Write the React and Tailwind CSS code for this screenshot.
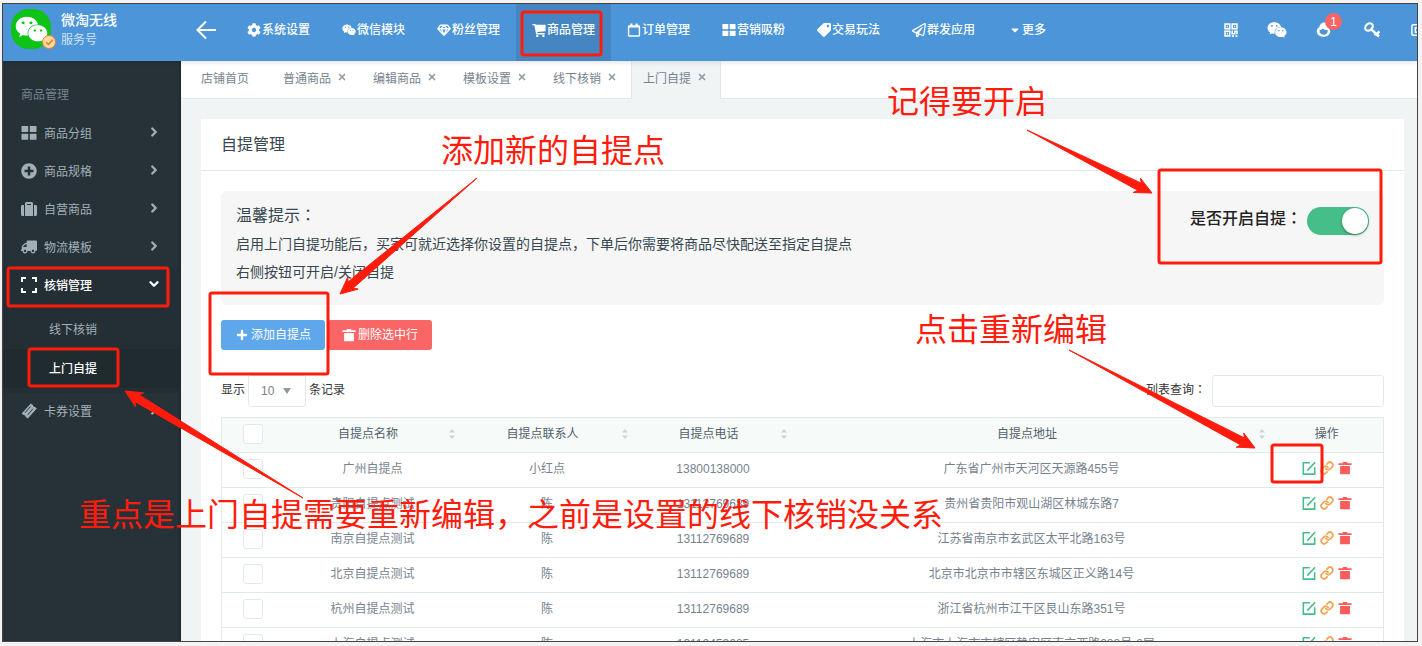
import React, { useState } from 'react';
import { FaCog, FaWeixin, FaRegPaperPlane, FaTag, FaCaretDown, FaPlusCircle, FaSuitcase, FaTruck } from 'react-icons/fa';
import { Check, ChevronDown, ChevronRight, Link, Plus, X } from 'lucide-react';

const BackIcon = ({ className }) => (
  <svg viewBox="0 0 20 20" fill="none" stroke="currentColor" strokeWidth="2" className={className}>
    <path d="M20 10H1.500M10 1.500L1.500 10l8.500 8.500" />
  </svg>
);

const GridIcon = ({ className }) => (
  <svg viewBox="0 0 16 16" fill="currentColor" className={className}>
    <rect x="0.5" y="1" width="6.7" height="6" rx="0.6" />
    <rect x="8.8" y="1" width="6.7" height="6" rx="0.6" />
    <rect x="0.5" y="8.8" width="6.7" height="6" rx="0.6" />
    <rect x="8.8" y="8.8" width="6.7" height="6" rx="0.6" />
  </svg>
);

const DiamondIcon = ({ className }) => (
  <svg viewBox="0 0 16 16" fill="none" stroke="currentColor" strokeWidth="1.6" strokeLinejoin="round" className={className}>
    <path d="M4 2.5h8L15 6.5 8 14 1 6.5zM1 6.5h14M5 6.5L8 14l3-7.5M5 6.5L8 2.5l3 4" />
  </svg>
);

const CartIcon = ({ className }) => (
  <svg viewBox="0 0 16 16" fill="currentColor" className={className}>
    <path d="M0.5 1h3.4l0.4 1H15.500v7.300L5.900 10.200l0.300 1.200H14.500v1.600H4.800L2.600 2.600H0.5z" />
    <rect x="4.800" y="13.800" width="2.400" height="2.200" />
    <rect x="11.800" y="13.800" width="2.400" height="2.200" />
  </svg>
);

const CalendarIcon = ({ className }) => (
  <svg viewBox="0 0 16 16" fill="none" stroke="currentColor" strokeWidth="1.6" className={className}>
    <rect x="1.8" y="3.4" width="12.4" height="11.400" rx="0.8" />
    <path d="M1.8 4.200h12.400" strokeWidth="2" />
    <path d="M5 0.600v3.4M11 0.600v3.4" strokeWidth="2.400" />
  </svg>
);

const ExpandIcon = ({ className }) => (
  <svg viewBox="0 0 16 16" fill="none" stroke="currentColor" strokeWidth="2" className={className}>
    <path d="M1 5V1h4M11 1h4v4M15 11v4h-4M5 15H1v-4" />
  </svg>
);

const TicketIcon = ({ className }) => (
  <svg viewBox="0 0 16 16" className={className}>
    <path fill="currentColor" d="M9.800 0.400l2.200 1.700c-0.300 1 0.600 2 1.700 1.700l2.100 1.700-9 10.100-2.200-1.600c0.300-1.100-0.600-2-1.700-1.700l-2.300-1.700z" />
    <path d="M9.4 3.6L4 9.8M12 5.7L6.6 12" stroke="#263238" strokeWidth="0.9" />
  </svg>
);

const QrIcon = ({ className }) => (
  <svg viewBox="0 0 16 16" fill="none" stroke="currentColor" strokeWidth="1.8" className={className}>
    <rect x="1.2" y="1.2" width="5.4" height="5.4" />
    <rect x="9.4" y="1.2" width="5.4" height="5.4" />
    <rect x="1.2" y="9.4" width="5.4" height="5.4" />
    <path d="M3.2 3.9h1.4M11.4 3.9h1.4M3.2 12.1h1.4M9.4 8.6v3.6h3V9.4h2.4v3.4M9 15h2.4M13 15h2.4" />
  </svg>
);

const PenguinIcon = ({ className }) => (
  <svg viewBox="0 0 16 16" className={className}>
    <path fill="currentColor" d="M8.500 0.300c2.800 0.600 3.600 2.800 4 5.200 1.700 1.200 2.700 2.800 2.700 4.600 0 3.200-3.200 5.600-7.200 5.600s-7.200-2.400-7.200-5.600c0-1.900 1-3.500 2.700-4.700C3.900 3.200 5.400 0.900 8.500 0.300z" />
    <path fill="#4b95d8" d="M3.800 8.600c1.600-0.200 2.600-0.800 3.400-1.700 1.400 1.300 3.200 1.700 5.200 1.600 0.400 2.900-1.500 5.100-4.300 5.100-2.700 0-4.600-2.100-4.300-5z" />
  </svg>
);

const KeyIcon = ({ className }) => (
  <svg viewBox="0 0 16 16" fill="none" stroke="currentColor" className={className}>
    <ellipse cx="5" cy="5" rx="4.200" ry="3.200" strokeWidth="2.200" transform="rotate(-45 5 5)" />
    <path d="M7.500 7.500l7.500 7M10.500 13.300l2.200-2.400M13.500 11.400l2-2" strokeWidth="2.400" />
  </svg>
);

const ScreenIcon = ({ className }) => (
  <svg viewBox="0 0 16 16" fill="none" stroke="currentColor" strokeWidth="1.700" className={className}>
    <rect x="1" y="2" width="14" height="12" rx="1.500" />
    <path d="M5 5.500h6v5H5z" />
  </svg>
);

const TrashIcon = ({ className }) => (
  <svg viewBox="0 0 16 16" fill="currentColor" className={className}>
    <path d="M5.500 1h5v1.600H15.500v2H0.500v-2h5zM2.400 5.800h11.200V15H2.400z" />
  </svg>
);

const EditIcon = ({ className }) => (
  <svg viewBox="0 0 16 16" fill="none" stroke="currentColor" strokeWidth="1.800" className={className}>
    <path d="M9 2H1.500v13h13V7M15 1.500L6 11" />
  </svg>
);

const SortIcon = () => (
  <svg viewBox="0 0 6 10" fill="#cdd5d9" className="h-[10px] w-[6px]">
    <path d="M3 0l3 3.500H0zM0 6.500h6L3 10z" />
  </svg>
);

// full-width colon, centred in its box
const Colon = () => <span className="leading-none font-['Noto_Sans_CJK_TC',sans-serif]">：</span>;

const navItems = [
  { label: '系统设置', Icon: FaCog },
  { label: '微信模块', Icon: FaWeixin },
  { label: '粉丝管理', Icon: DiamondIcon },
  { label: '商品管理', Icon: CartIcon, active: true },
  { label: '订单管理', Icon: CalendarIcon },
  { label: '营销吸粉', Icon: GridIcon },
  { label: '交易玩法', Icon: FaTag, flip: true },
  { label: '群发应用', Icon: FaRegPaperPlane },
];

const menuItems = [
  { label: '商品分组', Icon: GridIcon },
  { label: '商品规格', Icon: FaPlusCircle },
  { label: '自营商品', Icon: FaSuitcase },
  { label: '物流模板', Icon: FaTruck, flip: true },
  { label: '核销管理', Icon: ExpandIcon, open: true, children: ['线下核销', '上门自提'] },
  { label: '卡券设置', Icon: TicketIcon },
];

const tabs = ['普通商品', '编辑商品', '模板设置', '线下核销', '上门自提'];

const points = [
  { name: '广州自提点', contact: '小红点', phone: '13800138000', address: '广东省广州市天河区天源路455号' },
  { name: '贵阳自提点测试', contact: '陈', phone: '13112769689', address: '贵州省贵阳市观山湖区林城东路7' },
  { name: '南京自提点测试', contact: '陈', phone: '13112769689', address: '江苏省南京市玄武区太平北路163号' },
  { name: '北京自提点测试', contact: '陈', phone: '13112769689', address: '北京市北京市市辖区东城区正义路14号' },
  { name: '杭州自提点测试', contact: '陈', phone: '13112769689', address: '浙江省杭州市江干区艮山东路351号' },
  { name: '上海自提点测试', contact: '陈', phone: '13112453685', address: '上海市上海市市辖区静安区南京西路288号-2层' },
];

const Header = () => (
  <header className="relative z-10 flex h-[57px] shrink-0 bg-[#4b95d8] text-white shadow-[0_2px_4px_rgba(0,0,0,0.1)]">
    <div className="flex w-[178px] shrink-0 items-start gap-[6px] pt-[5px] pl-2">
      <div className="relative h-10 w-11 shrink-0">
        <div className="flex h-10 w-10 items-center justify-center rounded-[18px] bg-[#0cc316]">
          <FaWeixin className="h-[33px] w-[33px]" />
        </div>
        <span className="absolute -right-px bottom-0 flex h-[14px] w-[14px] items-center justify-center rounded-full border border-[#e8802c] bg-[#ffd9a0] text-[#e8802c]">
          <Check className="h-[9px] w-[9px]" strokeWidth={4} />
        </span>
      </div>
      <div>
        <p className="text-sm leading-[22px] font-medium">微淘无线</p>
        <p className="text-xs leading-[18px] text-[#cfe3f6]">服务号</p>
      </div>
    </div>
    <button type="button" aria-label="返回" className="flex w-[50px] shrink-0 items-center pb-[6px] pl-[15px]">
      <BackIcon className="h-5 w-5" />
    </button>
    <nav className="flex shrink-0">
      {navItems.map(({ label, Icon, active, flip }) => (
        <a
          key={label}
          href="#"
          className={`flex w-[95px] items-center justify-center gap-px pb-[5px] text-xs font-medium ${active ? 'bg-[#4586c2]' : ''}`}
        >
          <Icon className={`h-[14px] w-[14px] ${flip ? '-scale-x-100' : ''}`} />
          {label}
        </a>
      ))}
      <a href="#" className="flex items-center gap-px pb-[5px] pl-[18px] text-xs font-medium">
        <FaCaretDown className="h-3 w-3" />
        更多
      </a>
    </nav>
    <div className="-mr-2 ml-auto flex shrink-0 items-center gap-[29px] pb-[6px]">
      <button type="button" aria-label="二维码"><QrIcon className="h-[14px] w-[14px]" /></button>
      <button type="button" aria-label="微信"><FaWeixin className="h-5 w-5" /></button>
      <button type="button" aria-label="消息" className="relative">
        <PenguinIcon className="h-[15px] w-[15px]" />
        <span className="absolute -top-[9px] left-[9px] flex h-[17px] w-[17px] items-center justify-center rounded-full bg-[#fa6464] text-xs">1</span>
      </button>
      <button type="button" aria-label="密码" className="mr-[2px] ml-1"><KeyIcon className="h-4 w-4" /></button>
      <button type="button" aria-label="全屏"><ScreenIcon className="h-[14px] w-[14px]" /></button>
    </div>
  </header>
);

const Sidebar = () => (
  <aside className="w-[178px] shrink-0 border-r-2 border-[#1f2a2f] bg-[#263238] text-xs text-[#a3afb7]">
    <h2 className="pt-[15px] pb-px pl-[18px] leading-[38px] text-[#76838f]">商品管理</h2>
    <ul>
      {menuItems.map(({ label, Icon, open, flip, children }) => (
        <li key={label} className={open ? 'bg-[#242f35]' : ''}>
          <a href="#" className={`flex h-[38px] items-center pr-[18px] pl-[18px] ${open ? 'font-medium text-white' : ''}`}>
            <Icon className={`mr-[7px] mb-[3px] h-4 w-4 ${flip ? '-scale-x-100' : ''}`} />
            {label}
            {open ? (
              <ChevronDown className="mb-1 ml-auto h-[14px] w-[14px]" strokeWidth={4} />
            ) : (
              <ChevronRight className="mb-1 ml-auto h-[14px] w-[14px]" strokeWidth={4} />
            )}
          </a>
          {children && (
            <ul className="py-[5px]">
              {children.map((child) => (
                <li key={child}>
                  <a
                    href="#"
                    className={`flex h-[39px] items-center pl-[46px] ${child === '上门自提' ? 'bg-[#202b30] font-medium text-white' : ''}`}
                  >
                    {child}
                  </a>
                </li>
              ))}
            </ul>
          )}
        </li>
      ))}
    </ul>
  </aside>
);

const TabBar = () => (
  <div className="flex h-[38px] shrink-0 border-b border-[#e0e9ea] bg-white text-xs text-[#76838f]">
    <a href="#" className="flex w-[90px] items-center pb-[2px] pl-5">店铺首页</a>
    {tabs.map((tab) => {
      const active = tab === '上门自提';
      return (
        <div
          key={tab}
          className={`flex w-[90px] items-center border-x pb-[2px] pl-[11px] ${active ? '-mb-px border-[#e0e9ea] bg-[#f0f4f5]' : 'border-transparent'}`}
        >
          <a href="#">{tab}</a>
          <button type="button" aria-label={`关闭${tab}`} className="ml-[6px] pb-1">
            <X className="h-[10px] w-[10px] text-[#8f9aa3]" strokeWidth={4} />
          </button>
        </div>
      );
    })}
  </div>
);

const PointTable = () => (
  <table className="mt-[10px] w-full table-fixed border-collapse border border-[#e1e9eb] text-center text-xs text-[#76838f]">
    <colgroup>
      <col className="w-[63px]" />
      <col className="w-[176px]" />
      <col className="w-[173px]" />
      <col className="w-[159px]" />
      <col />
      <col className="w-[113px]" />
    </colgroup>
    <thead className="bg-[#f6faf9] text-[#526069]">
      <tr className="h-[35px] border-b border-[#e1e9eb]">
        <th className="p-0 pb-[2px]">
          <input type="checkbox" aria-label="全选" className="mx-auto block h-5 w-5 appearance-none rounded-[3px] border border-[#e1e9eb] bg-white checked:bg-[#5ea7ea]" />
        </th>
        {['自提点名称', '自提点联系人', '自提点电话', '自提点地址'].map((title) => (
          <th key={title} className="p-0 pb-[2px] font-normal">
            <div className="flex items-center pr-[6px]">
              <span className="flex-1 pl-[3px]">{title}</span>
              <SortIcon />
            </div>
          </th>
        ))}
        <th className="p-0 pb-[2px] font-normal">操作</th>
      </tr>
    </thead>
    <tbody>
      {points.map((point) => (
        <tr key={point.name} className="h-[35px] border-b border-[#e1e9eb]">
          <td className="p-0 pb-[2px]">
            <input type="checkbox" aria-label={point.name} className="mx-auto block h-5 w-5 appearance-none rounded-[3px] border border-[#e1e9eb] bg-white checked:bg-[#5ea7ea]" />
          </td>
          <td className="p-0 pb-[2px]">{point.name}</td>
          <td className="p-0 pb-[2px]">{point.contact}</td>
          <td className="p-0 pb-[2px]">{point.phone}</td>
          <td className="p-0 pb-[2px]">{point.address}</td>
          <td className="p-0 pb-1">
            <div className="flex items-center justify-center gap-1">
              <button type="button" aria-label="编辑" className="text-[#46be8a]"><EditIcon className="h-[14px] w-[14px]" /></button>
              <button type="button" aria-label="链接" className="text-[#f2a654]"><Link className="h-[14px] w-[14px]" strokeWidth={3} /></button>
              <button type="button" aria-label="删除" className="text-[#fa5c5c]"><TrashIcon className="h-[14px] w-[14px]" /></button>
            </div>
          </td>
        </tr>
      ))}
    </tbody>
  </table>
);

const arrows = [
  { from: [1027, 130], to: [1152, 193] },
  { from: [1069, 350], to: [1255, 448] },
  { from: [477, 178], to: [340, 294] },
  { from: [303, 498], to: [125, 391] },
];

// thin tail that widens towards the head
const arrowPoints = ([x1, y1], [x2, y2]) => {
  const len = Math.hypot(x2 - x1, y2 - y1);
  const dx = (x2 - x1) / len;
  const dy = (y2 - y1) / len;
  const at = (back, side) => `${x2 - dx * back - dy * side},${y2 - dy * back + dx * side}`;
  return [`${x1},${y1}`, at(14, 4), at(17, 8), `${x2},${y2}`, at(17, -8), at(14, -4)].join(' ');
};

const Annotations = () => (
  <div className="pointer-events-none absolute inset-0 z-20 overflow-hidden text-[32px] leading-10 font-normal whitespace-nowrap text-[#ff1c0c]">
    <svg className="absolute inset-0 h-full w-full" fill="none">
      <g stroke="#ff1c0c" strokeWidth="3">
        <rect x="522" y="12" width="79" height="43" rx="2" />
        <rect x="8" y="268" width="160" height="38" rx="2" />
        <rect x="29" y="349" width="89" height="37" rx="2" />
        <rect x="210" y="293" width="118" height="81" rx="2" />
        <rect x="1159" y="170" width="222" height="93" rx="2" />
        <rect x="1272" y="445" width="50" height="37" rx="2" />
      </g>
      {arrows.map(({ from, to }) => (
        <polygon key={from.join()} points={arrowPoints(from, to)} fill="#ff1c0c" stroke="#ff1c0c" strokeWidth="1" />
      ))}
    </svg>
    <span className="absolute top-[82px] left-[887px]">记得要开启</span>
    <span className="absolute top-[131px] left-[441px]">添加新的自提点</span>
    <span className="absolute top-[310px] left-[915px]">点击重新编辑</span>
    <span className="absolute top-[495px] left-[79px]">重点是上门自提需要重新编辑，之前是设置的线下核销没关系</span>
  </div>
);

const App = () => {
  const [enabled, setEnabled] = useState(true);

  return (
    <div className="relative h-screen bg-[#f3f3f3] pt-[3px] pr-1 pb-1 pl-[2px] font-['Liberation_Sans','Noto_Sans_CJK_SC',sans-serif]">
      <div className="flex h-full flex-col overflow-hidden border border-[#444]">
        <Header />
        <div className="flex min-h-0 flex-1">
          <Sidebar />
          <main className="min-w-0 flex-1 overflow-hidden bg-[#f0f4f5]">
            <TabBar />
            <section className="mt-5 mr-[13px] ml-5 bg-white">
              <h1 className="border-b border-[#e1e9eb] px-5 pt-[14px] pb-[13px] text-base leading-6 text-[#37474f]">自提管理</h1>
              <div className="px-5 pt-5">
                <div className="flex items-start justify-between rounded-md bg-[#f6f6f6] px-[15px] pt-[11px] pb-[19px] text-[#37474f]">
                  <div>
                    <h2 className="text-base leading-7">温馨提示<Colon /></h2>
                    <p className="text-sm leading-7">启用上门自提功能后，买家可就近选择你设置的自提点，下单后你需要将商品尽快配送至指定自提点</p>
                    <p className="text-sm leading-7">右侧按钮可开启/关闭自提</p>
                  </div>
                  <label className="relative flex items-start gap-[5px] pt-[5px]">
                    <span className="text-base leading-6 font-medium text-[#222]">是否开启自提<Colon /></span>
                    <input
                      type="checkbox"
                      className="peer sr-only"
                      checked={enabled}
                      onChange={(e) => setEnabled(e.target.checked)}
                    />
                    <span className="flex h-7 w-[62px] rounded-full bg-[#ccd5db] p-px peer-checked:justify-end peer-checked:bg-[#46be8a]">
                      <span className="h-[26px] w-[26px] rounded-full bg-white shadow-[0_1px_3px_rgba(0,0,0,0.4)]" />
                    </span>
                  </label>
                </div>

                <div className="mt-[15px] flex gap-[3px] text-xs text-white">
                  <button type="button" className="flex h-[30px] items-center gap-[2px] rounded-[3px] bg-[#5ea7ea] px-[14px]">
                    <Plus className="h-[14px] w-[14px]" strokeWidth={4} />
                    添加自提点
                  </button>
                  <button type="button" className="flex h-[30px] items-center gap-[2px] rounded-[3px] bg-[#fa6666] px-[14px]">
                    <TrashIcon className="h-[14px] w-[14px]" />
                    删除选中行
                  </button>
                </div>

                <div className="mt-[25px] flex items-center justify-between text-xs text-[#333]">
                  <label className="flex items-center gap-[3px]">
                    <span className="pb-[2px]">显示</span>
                    <span className="relative flex items-center">
                      <select defaultValue="10" className="h-8 w-[58px] appearance-none rounded-[3px] border border-[#e1e9eb] bg-white pl-3 text-[#76838f]">
                        <option>10</option>
                        <option>25</option>
                        <option>50</option>
                      </select>
                      <svg viewBox="0 0 8 6" className="pointer-events-none absolute right-[15px] h-[6px] w-2" fill="#8f9aa3">
                        <path d="M0 0h8L4 6z" />
                      </svg>
                    </span>
                    <span className="pb-[2px]">条记录</span>
                  </label>
                  <label className="flex items-center gap-[6px]">
                    <span className="pb-[2px]">列表查询<Colon /></span>
                    <input type="search" className="h-8 w-[172px] rounded-[3px] border border-[#e1e9eb] px-3" />
                  </label>
                </div>

                <PointTable />
              </div>
            </section>
          </main>
        </div>
      </div>
      <Annotations />
    </div>
  );
};

export default App;
